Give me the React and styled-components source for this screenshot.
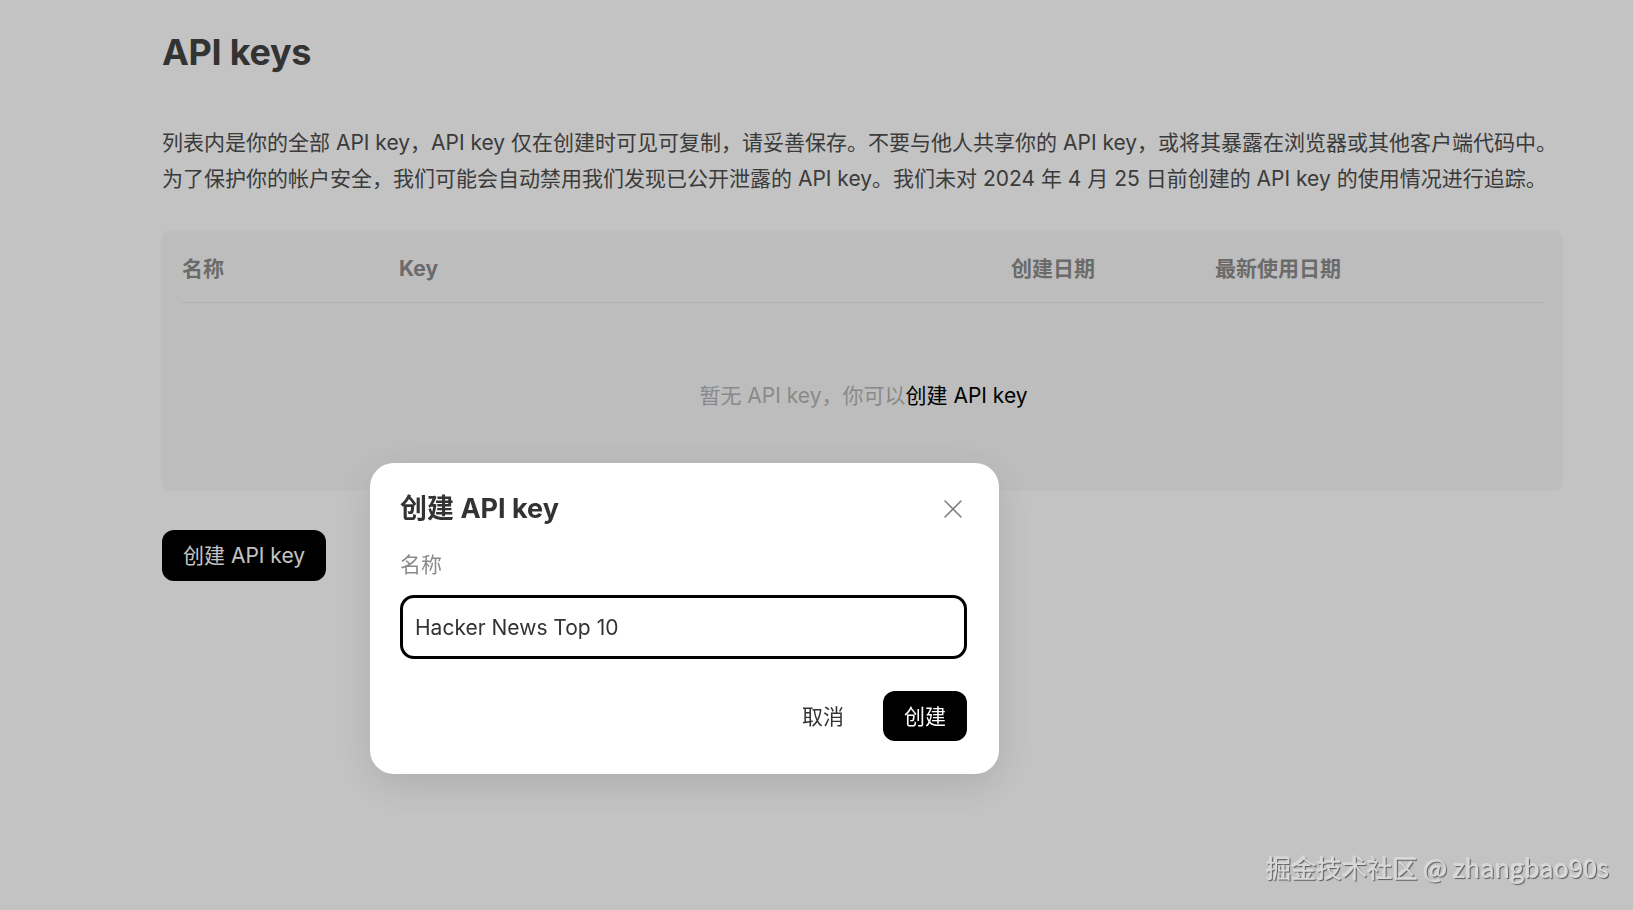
import React from "react";
import styled, { createGlobalStyle } from "styled-components";

const Global = createGlobalStyle`
  html, body { margin: 0; padding: 0; background: #ffffff; }
  body { font-family: "Inter", "Noto Sans CJK SC", sans-serif; }
  * { box-sizing: border-box; }
`;

const Page = styled.main`
  min-height: 910px;
  padding: 30px 0 0 162px;
  width: 1562px;
`;

const Title = styled.h1`
  margin: 0;
  font-size: 36px;
  line-height: 44px;
  font-weight: 700;
  color: #434343;
  letter-spacing: -0.3px;
`;

const Intro = styled.p`
  margin: 51px 0 0;
  font-size: 21px;
  line-height: 36px;
  color: #4e4e4e;
  white-space: nowrap;
`;

const TableCard = styled.section`
  margin-top: 34px;
  background: #f8f8f8;
  border-radius: 8px;
  padding: 0 17px 0 20px;
  box-shadow: 0 0 3px rgba(0, 0, 0, 0.04);
`;

const HeaderRow = styled.div`
  display: grid;
  grid-template-columns: 217px 612px 204px 1fr;
  padding: 23px 0 18px;
  border-bottom: 1px solid #e7e7e7;
`;

const HeaderCell = styled.div`
  font-size: 21px;
  line-height: 30px;
  font-weight: 700;
  color: #8c8c8c;
`;

const Empty = styled.div`
  height: 187px;
  padding-bottom: 6px;
  display: flex;
  align-items: center;
  justify-content: center;
  font-size: 21px;
  color: #b4b4b4;
`;

const EmptyLink = styled.a`
  color: #000;
  text-decoration: none;
  cursor: pointer;
`;

const PrimaryButton = styled.button`
  border: none;
  background: #000;
  color: #fff;
  font-family: inherit;
  font-size: 21px;
  line-height: 1;
  border-radius: 12px;
  height: ${(p) => p.$h}px;
  padding: 0 ${(p) => p.$px}px;
  cursor: pointer;
`;

const CreateRow = styled.div`
  margin-top: 40px;
  display: flex;
`;

const Backdrop = styled.div`
  position: fixed;
  inset: 0;
  background: rgba(0, 0, 0, 0.236);
`;

const Dialog = styled.div`
  position: fixed;
  left: 370px;
  top: 463px;
  width: 629px;
  background: #fff;
  border-radius: 24px;
  padding: 28px 32px 33px 30px;
  box-shadow: 0 10px 40px rgba(0, 0, 0, 0.12);
  display: flex;
  flex-direction: column;
`;

const DialogHead = styled.div`
  display: flex;
  align-items: center;
  justify-content: space-between;
`;

const DialogTitle = styled.h2`
  margin: 0;
  font-size: 27px;
  line-height: 36px;
  font-weight: 700;
  color: #333;
`;

const CloseButton = styled.button`
  border: none;
  background: transparent;
  padding: 0;
  width: 24px;
  height: 24px;
  margin-right: 2px;
  display: flex;
  align-items: center;
  justify-content: center;
  cursor: pointer;
`;

const Label = styled.label`
  margin-top: 24px;
  font-size: 21px;
  line-height: 28px;
  color: #8a8a8a;
`;

const Input = styled.input`
  margin-top: 16px;
  height: 64px;
  width: 100%;
  border: 3px solid #000;
  border-radius: 14px;
  padding: 0 12px;
  font-family: inherit;
  font-size: 21px;
  color: #333;
  outline: none;
`;

const Footer = styled.div`
  margin-top: 32px;
  display: flex;
  justify-content: flex-end;
  align-items: center;
  gap: 39px;
`;

const TextButton = styled.button`
  border: none;
  background: transparent;
  font-family: inherit;
  font-size: 21px;
  line-height: 1;
  color: #333;
  padding: 0;
  cursor: pointer;
`;

const Watermark = styled.div`
  position: fixed;
  left: 1266px;
  top: 850px;
  font-family: "Noto Sans CJK SC", "Noto Sans", sans-serif;
  font-size: 25.3px;
  line-height: 34px;
  color: #d9d9d9;
  text-shadow: 1px 1px 1px rgba(0, 0, 0, 0.55), -1px -1px 0 rgba(255, 255, 255, 0.35);
  white-space: nowrap;
  pointer-events: none;
`;

export default function App() {
  return (
    <>
      <Global />
      <Page>
        <Title>API keys</Title>
        <Intro>
          列表内是你的全部 API key，API key 仅在创建时可见可复制，请妥善保存。不要与他人共享你的 API key，或将其暴露在浏览器或其他客户端代码中。
          <br />
          为了保护你的帐户安全，我们可能会自动禁用我们发现已公开泄露的 API key。我们未对 2024 年 4 月 25 日前创建的 API key 的使用情况进行追踪。
        </Intro>
        <TableCard>
          <HeaderRow>
            <HeaderCell>名称</HeaderCell>
            <HeaderCell>Key</HeaderCell>
            <HeaderCell>创建日期</HeaderCell>
            <HeaderCell>最新使用日期</HeaderCell>
          </HeaderRow>
          <Empty>
            暂无 API key，你可以<EmptyLink>创建 API key</EmptyLink>
          </Empty>
        </TableCard>
        <CreateRow>
          <PrimaryButton $h={51} $px={21}>创建 API key</PrimaryButton>
        </CreateRow>
      </Page>
      <Backdrop />
      <Dialog role="dialog">
        <DialogHead>
          <DialogTitle>创建 API key</DialogTitle>
          <CloseButton aria-label="关闭">
            <svg width="20" height="20" viewBox="0 0 20 20">
              <path d="M2 2 L18 18 M18 2 L2 18" stroke="#808080" strokeWidth="1.6" strokeLinecap="round" />
            </svg>
          </CloseButton>
        </DialogHead>
        <Label>名称</Label>
        <Input defaultValue="Hacker News Top 10" />
        <Footer>
          <TextButton>取消</TextButton>
          <PrimaryButton $h={50} $px={21}>创建</PrimaryButton>
        </Footer>
      </Dialog>
      <Watermark>掘金技术社区 @ zhangbao90s</Watermark>
    </>
  );
}
